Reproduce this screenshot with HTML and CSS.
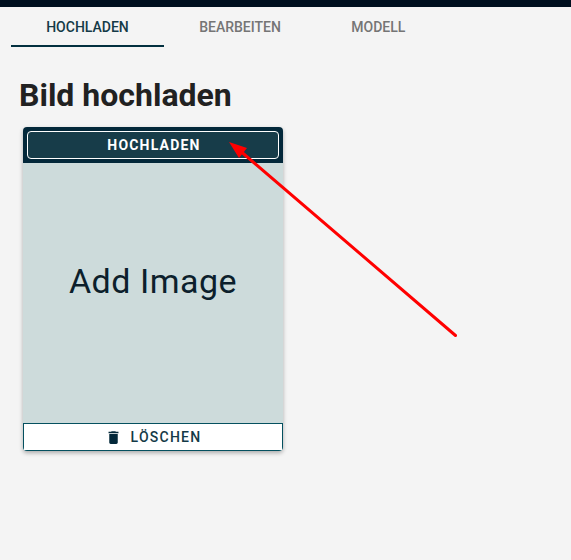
FILE: index.html
```html
<!DOCTYPE html>
<html lang="de">
<head>
<meta charset="utf-8">
<title>Bild hochladen</title>
<link rel="stylesheet" href="styles.css">
</head>
<body>
<div class="topbar"></div>
<nav class="tabs">
  <a class="tab active">HOCHLADEN</a>
  <a class="tab">BEARBEITEN</a>
  <a class="tab">MODELL</a>
</nav>
<main class="content">
  <h1 class="title">Bild hochladen</h1>
  <section class="card">
    <div class="card-head"><button class="upload">HOCHLADEN</button></div>
    <div class="image">Add Image</div>
    <button class="delete">
      <svg class="trash" width="17" height="17" viewBox="0 0 24 24"><path d="M6 19c0 1.100.9 2 2 2h8c1.100 0 2-.9 2-2V7H6v12zM19 4h-3.500l-1-1h-5l-1 1H5v2h14V4z"/></svg>
      <span>LÖSCHEN</span>
    </button>
  </section>
</main>
<svg class="arrow" width="571" height="560" viewBox="0 0 571 560">
  <line x1="455.500" y1="335.500" x2="238" y2="149" stroke="#ff0000" stroke-width="3" stroke-linecap="round"/>
  <polygon points="229,142 247,148 239,158" fill="#ff0000"/>
</svg>
</body>
</html>
```
FILE: styles.css
```css
* { box-sizing: border-box; }
html, body { margin: 0; height: 100%; }
body {
  background: #f4f4f4;
  font-family: Roboto, "Liberation Sans", sans-serif;
  overflow: hidden;
}
.topbar { height: 7px; background: #00101f; }
.tabs { display: flex; padding-left: 11px; height: 40px; }
.tab {
  display: flex;
  align-items: center;
  padding: 2px 35.2px 0;
  font-size: 14px;
  font-weight: 500;
  color: #757575;
  border-bottom: 2px solid transparent;
}
.tab.active { color: #143a47; border-bottom-color: #02303f; }
.content { padding: 0 0 0 19px; }
.title {
  margin: 29px 0 13px;
  font-size: 32px;
  line-height: 38px;
  font-weight: 700;
  color: #212121;
}
.card {
  width: 260px;
  margin-left: 4px;
  border-radius: 4px;
  overflow: hidden;
  box-shadow: 0 2px 4px rgba(0,0,0,.3);
}
.card-head {
  height: 36px;
  background: #03283a;
  padding: 4px;
}
.upload {
  display: block;
  width: 100%;
  height: 28px;
  padding: 0 0 0 2px;
  background: #173c49;
  border: 1px solid #fff;
  border-radius: 4px;
  color: #fff;
  font: 700 14px Roboto, sans-serif;
  letter-spacing: 1.2px;
}
.image {
  height: 260px;
  background: #cddbdb;
  display: flex;
  justify-content: center;
  font-size: 34px;
  line-height: 40px;
  padding-top: 98px;
  color: #0c1f2c;
  letter-spacing: 0.5px;
}
.delete {
  display: flex;
  align-items: center;
  justify-content: center;
  gap: 9px;
  width: 100%;
  height: 28px;
  padding: 0;
  background: #fff;
  border: 1px solid #04505f;
  color: #143a47;
  font: 500 14px Roboto, sans-serif;
  letter-spacing: 1.25px;
}
.trash { fill: #03283a; }
.arrow { position: absolute; left: 0; top: 0; pointer-events: none; }
```
